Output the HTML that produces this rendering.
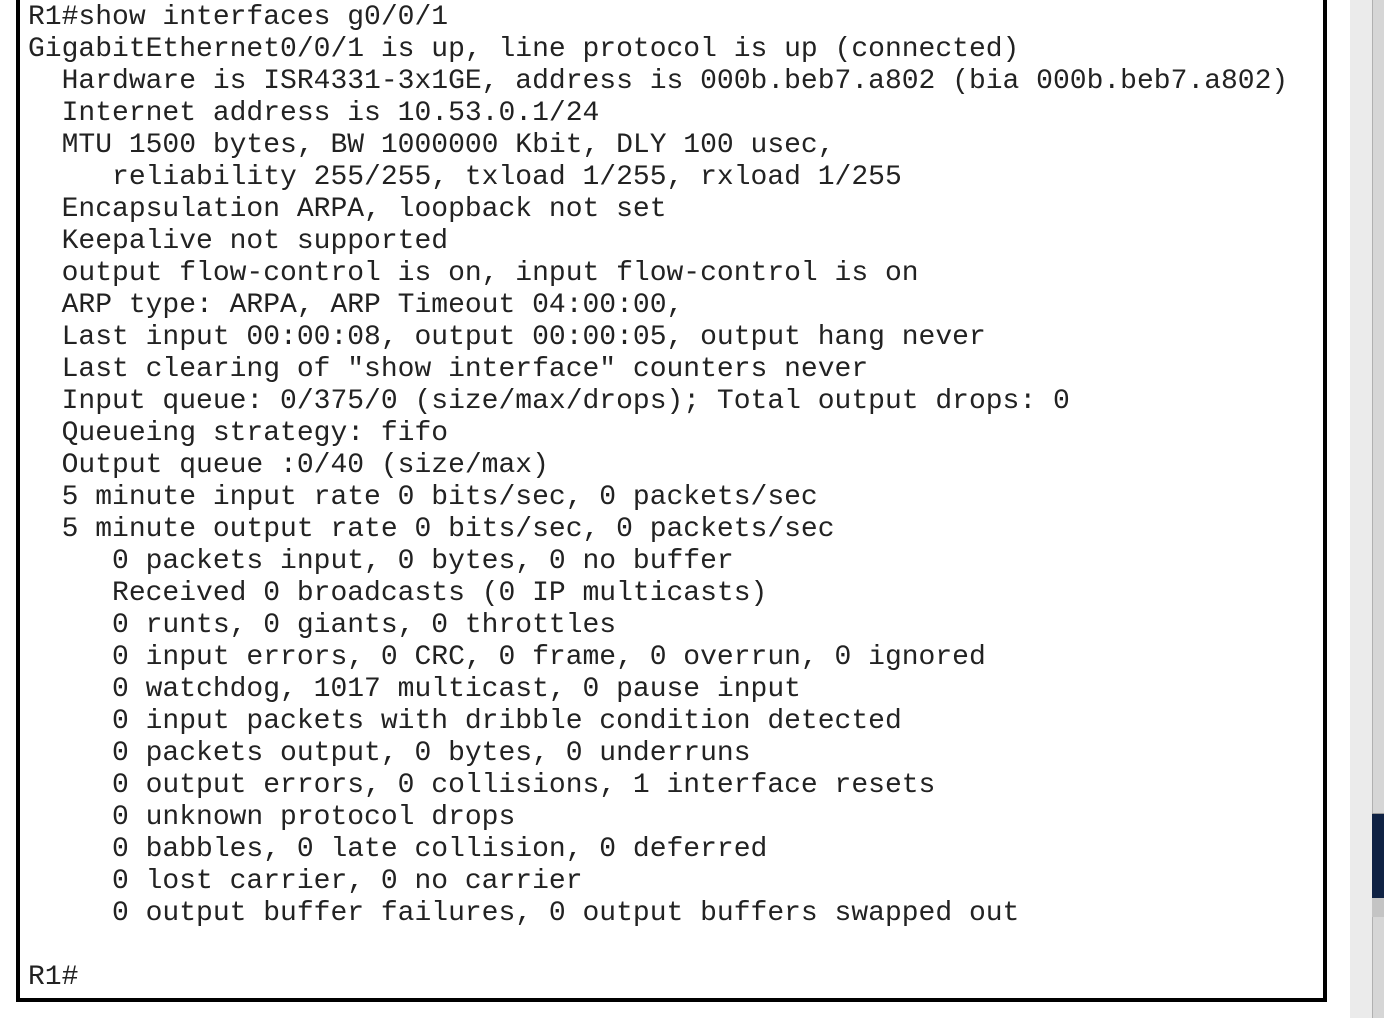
<!DOCTYPE html>
<html><head><style>
html,body{margin:0;padding:0;width:1384px;height:1018px;overflow:hidden;background:#fff;position:relative}
.box{position:absolute;left:16px;top:-10px;width:1303px;height:1004px;border:4px solid #000;background:#fff;box-sizing:content-box}
pre{position:absolute;left:28px;top:2px;margin:0;font-family:"Liberation Mono",monospace;font-size:28px;line-height:32px;color:#222}
.s1{position:absolute;left:1350px;top:0;width:22px;height:1018px;background:#ebebeb}
.s2{position:absolute;left:1372px;top:0;width:12px;height:1018px;background:#d6d6d6;border-left:1px solid #b0b0b0;box-sizing:border-box}
.nav{position:absolute;left:1372px;top:813px;width:12px;height:85px;background:#0f2244;border-top:1px solid #999}
.nb{position:absolute;left:1372px;top:898px;width:12px;height:19px;background:#c4c4c4}
</style></head><body>
<div class="box"></div>
<pre>R1#show interfaces g0/0/1
GigabitEthernet0/0/1 is up, line protocol is up (connected)
  Hardware is ISR4331-3x1GE, address is 000b.beb7.a802 (bia 000b.beb7.a802)
  Internet address is 10.53.0.1/24
  MTU 1500 bytes, BW 1000000 Kbit, DLY 100 usec,
     reliability 255/255, txload 1/255, rxload 1/255
  Encapsulation ARPA, loopback not set
  Keepalive not supported
  output flow-control is on, input flow-control is on
  ARP type: ARPA, ARP Timeout 04:00:00,
  Last input 00:00:08, output 00:00:05, output hang never
  Last clearing of "show interface" counters never
  Input queue: 0/375/0 (size/max/drops); Total output drops: 0
  Queueing strategy: fifo
  Output queue :0/40 (size/max)
  5 minute input rate 0 bits/sec, 0 packets/sec
  5 minute output rate 0 bits/sec, 0 packets/sec
     0 packets input, 0 bytes, 0 no buffer
     Received 0 broadcasts (0 IP multicasts)
     0 runts, 0 giants, 0 throttles
     0 input errors, 0 CRC, 0 frame, 0 overrun, 0 ignored
     0 watchdog, 1017 multicast, 0 pause input
     0 input packets with dribble condition detected
     0 packets output, 0 bytes, 0 underruns
     0 output errors, 0 collisions, 1 interface resets
     0 unknown protocol drops
     0 babbles, 0 late collision, 0 deferred
     0 lost carrier, 0 no carrier
     0 output buffer failures, 0 output buffers swapped out

R1#</pre>
<div class="s1"></div><div class="s2"></div><div class="nav"></div><div class="nb"></div>
</body></html>
